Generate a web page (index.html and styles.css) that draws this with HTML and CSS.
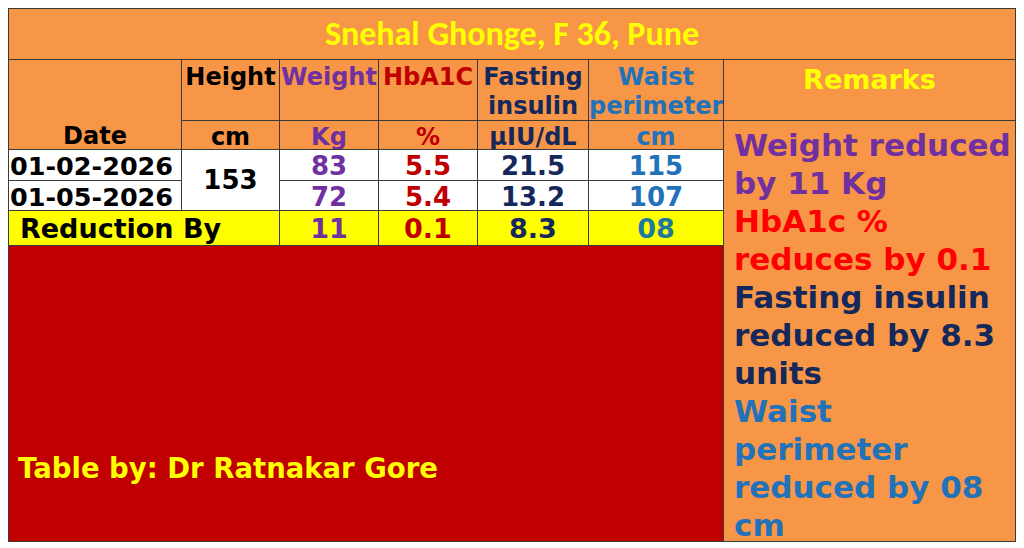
FILE: index.html
```html
<!DOCTYPE html>
<html lang="en">
<head>
<meta charset="utf-8">
<title>Snehal Ghonge, F 36, Pune</title>
<link rel="stylesheet" href="styles.css">
</head>
<body>
<div class="sheet">
  <div class="cell title">Snehal Ghonge, F 36, Pune</div>

  <div class="cell hd date-h">Date</div>
  <div class="cell hd c2 r2">Height</div>
  <div class="cell hd c3 r2 purple">Weight</div>
  <div class="cell hd c4 r2 dred">HbA1C</div>
  <div class="cell hd c5 r2 navy">Fasting<br>insulin</div>
  <div class="cell hd c6 r2 blue">Waist<br>perimeter</div>
  <div class="cell hd c7 r2 remarks-h">Remarks</div>

  <div class="cell unit c2 r3">cm</div>
  <div class="cell unit c3 r3 purple">Kg</div>
  <div class="cell unit c4 r3 dred">%</div>
  <div class="cell unit c5 r3 navy">µIU/dL</div>
  <div class="cell unit c6 r3 blue">cm</div>

  <div class="cell data datecell c1 r4">01-02-2026</div>
  <div class="cell data height-v">153</div>
  <div class="cell data c3 r4 purple">83</div>
  <div class="cell data c4 r4 dred">5.5</div>
  <div class="cell data c5 r4 navy">21.5</div>
  <div class="cell data c6 r4 blue">115</div>

  <div class="cell data datecell c1 r5">01-05-2026</div>
  <div class="cell data c3 r5 purple">72</div>
  <div class="cell data c4 r5 dred">5.4</div>
  <div class="cell data c5 r5 navy">13.2</div>
  <div class="cell data c6 r5 blue">107</div>

  <div class="cell red-row reduction-label">Reduction By</div>
  <div class="cell red-row c3 r6 purple">11</div>
  <div class="cell red-row c4 r6 dred">0.1</div>
  <div class="cell red-row c5 r6 navy">8.3</div>
  <div class="cell red-row c6 r6 teal">08</div>

  <div class="cell credit">Table by: Dr Ratnakar Gore</div>

  <div class="cell remarks">
    <p class="purple">Weight reduced<br>by 11 Kg</p>
    <p class="bred">HbA1c %<br>reduces by 0.1</p>
    <p class="navy">Fasting insulin<br>reduced by 8.3<br>units</p>
    <p class="blue">Waist<br>perimeter<br>reduced by 08<br>cm</p>
  </div>
</div>
</body>
</html>
```

FILE: styles.css
```css
* { box-sizing: border-box; }

html, body {
  margin: 0;
  background: #ffffff;
}

body {
  padding: 8px;
  font-family: Verdana, "DejaVu Sans", sans-serif;
  font-weight: bold;
}

.sheet {
  width: 1008px;
  height: 534px;
  display: grid;
  grid-template-columns: 173px 98px 99px 99px 111px 135px 1fr;
  grid-template-rows: 51px 61px 29px 31px 30px 35px 1fr;
  border-top: 1px solid #3a3a3a;
  border-left: 1px solid #3a3a3a;
  background: #F79646;
}

.cell {
  border-right: 1px solid #3a3a3a;
  border-bottom: 1px solid #3a3a3a;
  font-size: 24px;
  line-height: 29px;
  text-align: center;
  color: #000;
  white-space: nowrap;
  overflow: hidden;
}

.c1 { grid-column: 1; }
.c2 { grid-column: 2; }
.c3 { grid-column: 3; }
.c4 { grid-column: 4; }
.c5 { grid-column: 5; }
.c6 { grid-column: 6; }
.c7 { grid-column: 7; }
.r2 { grid-row: 2; }
.r3 { grid-row: 3; }
.r4 { grid-row: 4; }
.r5 { grid-row: 5; }
.r6 { grid-row: 6; }

.title {
  grid-column: 1 / -1;
  grid-row: 1;
  display: flex;
  align-items: center;
  justify-content: center;
  font-family: Carlito, "Open Sans", sans-serif;
  font-weight: bold;
  font-size: 34px;
  color: #FFFF00;
  padding-bottom: 1px;
}

.hd {
  padding-top: 3px;
}

.date-h {
  grid-column: 1;
  grid-row: 2 / 4;
  display: flex;
  align-items: flex-end;
  justify-content: center;
  padding-bottom: 0;
  line-height: 26px;
}

.remarks-h {
  color: #FFFF00;
  padding-top: 5px;
  font-size: 27px;
}

.unit {
  line-height: 32px;
}

.data {
  background: #ffffff;
  font-size: 26px;
  line-height: 32px;
}

.datecell {
  text-align: left;
  padding-left: 1px;
  font-size: 25.5px;
}

.height-v {
  grid-column: 2;
  grid-row: 4 / 6;
  display: flex;
  align-items: center;
  justify-content: center;
}

.red-row {
  background: #FFFF00;
  font-size: 27px;
  line-height: 36px;
}

.reduction-label {
  grid-column: 1 / 3;
  grid-row: 6;
  text-align: left;
  padding-left: 11px;
  color: #000;
}

.credit {
  grid-column: 1 / 7;
  grid-row: 7;
  background: #C00000;
  color: #FFFF00;
  display: flex;
  align-items: flex-end;
  justify-content: flex-start;
  padding-left: 9px;
  padding-bottom: 58px;
  font-size: 27.5px;
}

.remarks {
  grid-column: 7;
  grid-row: 3 / 8;
  text-align: left;
  padding: 5px 0 0 10px;
  font-size: 31px;
  line-height: 38px;
}

.remarks p {
  margin: 0;
}

.purple { color: #7030A0; }
.dred { color: #C00000; }
.bred { color: #FF0000; }
.navy { color: #15285C; }
.blue { color: #2272BA; }
.teal { color: #1E7A9C; }
```
